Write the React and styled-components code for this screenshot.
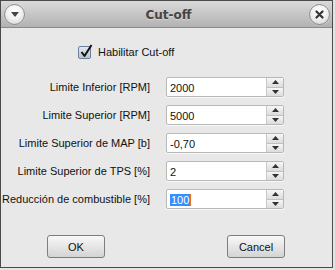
import React from "react";
import styled, { createGlobalStyle } from "styled-components";

const Global = createGlobalStyle`
  html, body { margin: 0; padding: 0; background: #e4e4e4; }
  body { font-family: "Liberation Sans", Arial, sans-serif; font-size: 11px; color: #111; }
`;

const Window = styled.div`
  width: 331px;
  height: 266px;
  border: 1px solid #4a4a4a;
  background: #e8e8e8;
  display: flex;
  flex-direction: column;
`;

const TitleBar = styled.div`
  height: 27px;
  flex: none;
  background: linear-gradient(#dadada, #b2b2b2);
  border-bottom: 1px solid #8c8c8c;
  display: flex;
  align-items: center;
  justify-content: space-between;
  padding: 1px 2px 0 3px;
  box-sizing: border-box;
`;

const Title = styled.div`
  font-family: "DejaVu Sans", sans-serif;
  font-weight: bold;
  font-size: 12px;
  color: #454545;
  text-shadow: 0 1px 0 rgba(255,255,255,0.35);
  margin-left: 3px;
`;

const RoundButton = styled.div`
  width: 19px;
  height: 19px;
  border-radius: 50%;
  border: 1px solid #8a8a8a;
  background: radial-gradient(circle at 50% 35%, #ffffff 0%, #f2f2f2 45%, #cfcfcf 100%);
  display: flex;
  align-items: center;
  justify-content: center;
  box-shadow: 0 0 1px rgba(255,255,255,0.8);
`;

const Content = styled.div`
  flex: 1;
  display: flex;
  flex-direction: column;
`;

const CheckRow = styled.label`
  display: flex;
  align-items: center;
  gap: 7px;
  margin: 17px 0 0 77px;
  height: 14px;
`;

const CheckBox = styled.div`
  width: 11px;
  height: 11px;
  border: 1px solid #6d7f99;
  border-radius: 2px;
  background: linear-gradient(#e4e8ef, #b9c3d2);
  position: relative;
`;

const CheckMark = styled.svg`
  position: absolute;
  left: 1px;
  top: -3px;
`;

const Form = styled.div`
  display: grid;
  grid-template-columns: 149px 118px;
  grid-auto-rows: 20px;
  column-gap: 16px;
  row-gap: 8px;
  margin-top: 18px;
`;

const Label = styled.div`
  text-align: right;
  align-self: center;
  white-space: nowrap;
  padding-bottom: 1px;
`;

const Spin = styled.div`
  display: flex;
  border: 1px solid #b8b8b8;
  border-radius: 2px;
  background: #fff;
  box-shadow: 0 1px 0 rgba(255,255,255,0.7);
`;

const SpinText = styled.div`
  flex: 1;
  display: flex;
  align-items: center;
  padding-left: 3px;
  padding-top: 1px;
`;

const Selected = styled.span`
  background: #3390ff;
  color: #fff;
  padding: 0 1px;
  border-right: 1px solid #e07020;
`;

const Arrows = styled.div`
  width: 16px;
  display: flex;
  flex-direction: column;
  border-left: 1px solid #c8c8c8;
`;

const Arrow = styled.div`
  flex: 1;
  display: flex;
  align-items: center;
  justify-content: center;
  background: linear-gradient(#f6f6f6, #dcdcdc);
  border-top: ${(p) => (p.$down ? "1px solid #c0c0c0" : "none")};
`;

const ButtonRow = styled.div`
  display: flex;
  margin: 26px 0 0 46px;
  gap: 122px;
`;

const Button = styled.div`
  width: 56px;
  height: 21px;
  border: 1px solid #7e7e7e;
  border-radius: 3px;
  background: linear-gradient(#f8f8f8, #e6e6e6 50%, #d4d4d4);
  display: flex;
  align-items: center;
  justify-content: center;
  color: #111;
`;

const Up = () => (
  <svg width="7" height="4" viewBox="0 0 7 4"><path d="M3.5 0 L7 4 L0 4 Z" fill="#333" /></svg>
);
const Down = () => (
  <svg width="7" height="4" viewBox="0 0 7 4"><path d="M0 0 L7 0 L3.5 4 Z" fill="#333" /></svg>
);

const rows = [
  ["Limite Inferior [RPM]", "2000"],
  ["Limite Superior [RPM]", "5000"],
  ["Limite Superior de MAP [b]", "-0,70"],
  ["Limite Superior de TPS [%]", "2"],
  ["Reducción de combustible [%]", "100", true],
];

export default function App() {
  return (
    <>
      <Global />
      <Window>
        <TitleBar>
          <RoundButton>
            <svg width="8" height="5" viewBox="0 0 8 5"><path d="M0 0 L8 0 L4 5 Z" fill="#444" /></svg>
          </RoundButton>
          <Title>Cut-off</Title>
          <RoundButton>
            <svg width="9" height="9" viewBox="0 0 9 9"><path d="M1.5 1.5 L7.5 7.5 M7.5 1.5 L1.5 7.5" stroke="#333" strokeWidth="2.2" strokeLinecap="round" /></svg>
          </RoundButton>
        </TitleBar>
        <Content>
          <CheckRow>
            <CheckBox>
              <CheckMark width="13" height="14" viewBox="0 0 13 14">
                <path d="M1.5 8 L4.5 12 L11.5 1" stroke="#111" strokeWidth="2" fill="none" strokeLinejoin="round" />
              </CheckMark>
            </CheckBox>
            <span>Habilitar Cut-off</span>
          </CheckRow>
          <Form>
            {rows.map(([label, value, sel]) => (
              <React.Fragment key={label}>
                <Label>{label}</Label>
                <Spin>
                  <SpinText>{sel ? <Selected>{value}</Selected> : value}</SpinText>
                  <Arrows>
                    <Arrow><Up /></Arrow>
                    <Arrow $down><Down /></Arrow>
                  </Arrows>
                </Spin>
              </React.Fragment>
            ))}
          </Form>
          <ButtonRow>
            <Button>OK</Button>
            <Button>Cancel</Button>
          </ButtonRow>
        </Content>
      </Window>
    </>
  );
}
